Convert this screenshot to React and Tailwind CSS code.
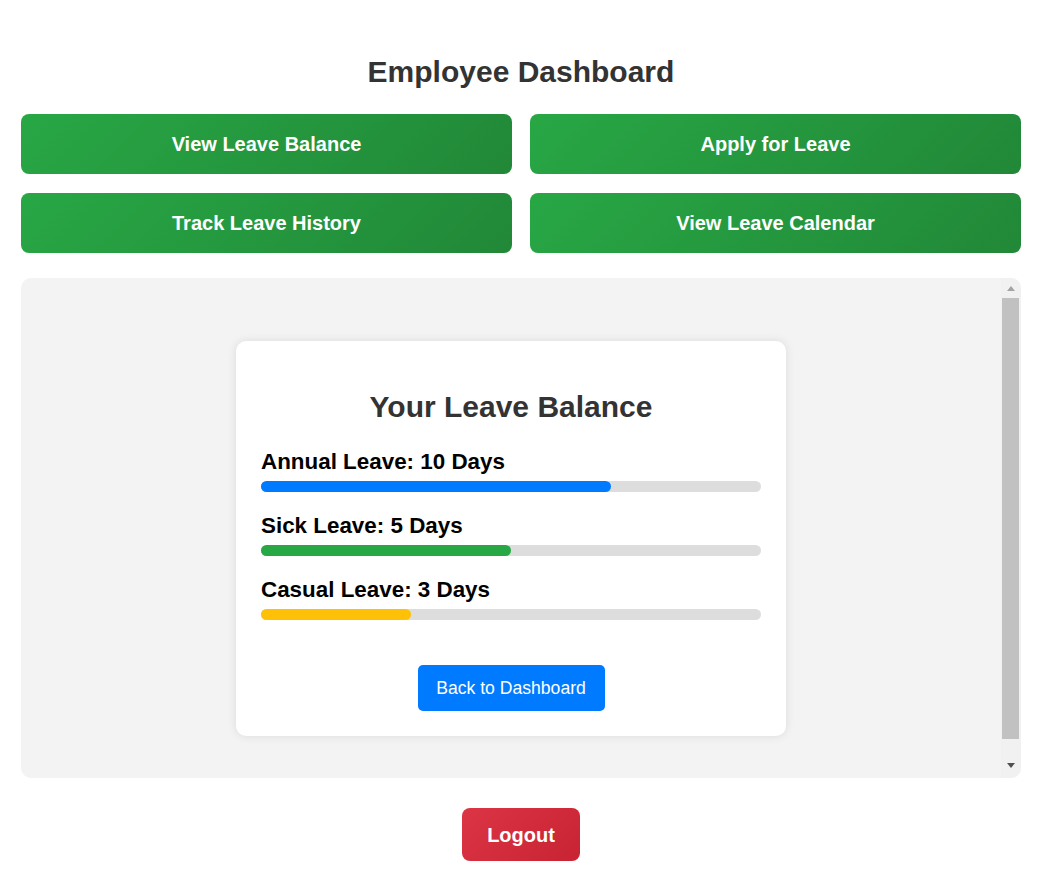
const balances = [
  { label: 'Annual Leave', days: 10, pct: 70, color: 'bg-[#007bff]' },
  { label: 'Sick Leave', days: 5, pct: 50, color: 'bg-[#28a745]' },
  { label: 'Casual Leave', days: 3, pct: 30, color: 'bg-[#ffc107]' },
]

const actions = ['View Leave Balance', 'Apply for Leave', 'Track Leave History', 'View Leave Calendar']

// fake classic scrollbar, the frame content is scrolled to the top
const ScrollBar = () => (
  <div className="flex w-[20px] flex-col bg-[#f1f1f1]">
    <div className="flex h-[20px] items-center justify-center">
      <svg width="8" height="5" viewBox="0 0 8 5">
        <path d="M4 0L8 5H0Z" fill="#a3a3a3" />
      </svg>
    </div>
    <div className="ml-[1px] mr-[2px] h-[441px] bg-[#c1c1c1]" />
    <div className="flex flex-1 items-end justify-center pb-[10px]">
      <svg width="8" height="5" viewBox="0 0 8 5">
        <path d="M0 0H8L4 5Z" fill="#505050" />
      </svg>
    </div>
  </div>
)

const App = () => {
  return (
    <div className="min-h-screen bg-white font-[family-name:'Liberation_Sans',Arial,sans-serif]">
      <div className="ml-[21px] w-[1000px] pt-[56px] pb-[20px]">
        <h1 className="text-center text-[30px] leading-[32px] font-bold text-[#333]">Employee Dashboard</h1>

        <div className="mt-[26px] grid grid-cols-2 gap-x-[18px] gap-y-[19px]">
          {actions.map((a) => (
            <button
              key={a}
              className="h-[60px] rounded-[8px] bg-linear-135 from-[#28a745] to-[#218838] text-[20px] font-bold text-white"
            >
              {a}
            </button>
          ))}
        </div>

        <div className="mt-[25px] flex h-[500px] overflow-hidden rounded-[10px] bg-[#f3f3f3]">
          <div className="flex-1 pt-[63px]">
            <div className="mx-auto w-[550px] rounded-[10px] bg-white px-[25px] pt-[50px] pb-[25px] shadow-[0_0_10px_rgba(0,0,0,0.1)]">
              <h2 className="text-center text-[30px] leading-[32px] font-bold text-[#333]">Your Leave Balance</h2>
              <div className="mt-[27px] space-y-[22px]">
                {balances.map((b) => (
                  <div key={b.label}>
                    <p className="text-[22.4px] leading-[24px] font-bold text-black">
                      {b.label}: {b.days} Days
                    </p>
                    <div className="mt-[7px] h-[11px] rounded-full bg-[#ddd]">
                      <div className={`h-full rounded-full ${b.color}`} style={{ width: `${b.pct}%` }} />
                    </div>
                  </div>
                ))}
              </div>
              <div className="mt-[45px] flex justify-center">
                <button className="h-[46px] w-[187px] rounded-[5px] bg-[#007bff] text-[17.6px] text-white">
                  Back to Dashboard
                </button>
              </div>
            </div>
          </div>
          <ScrollBar />
        </div>

        <div className="mt-[30px] flex justify-center">
          <button className="h-[53px] w-[118px] rounded-[8px] bg-linear-135 from-[#dc3545] to-[#c82333] text-[20px] font-bold text-white">
            Logout
          </button>
        </div>
      </div>
    </div>
  )
}

export default App
